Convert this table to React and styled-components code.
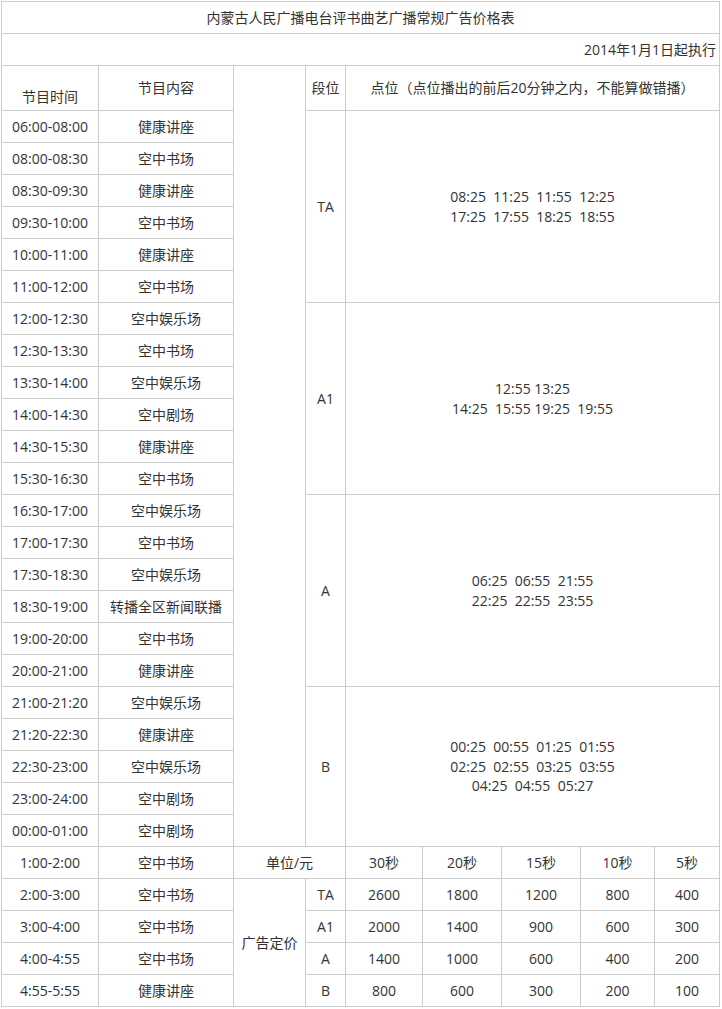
import React from 'react';
import styled, { createGlobalStyle } from 'styled-components';

const GlobalStyle = createGlobalStyle`
  html, body {
    margin: 0;
    padding: 0;
    background: #fff;
  }
  body {
    font-family: 'Open Sans', 'Noto Sans CJK SC', sans-serif;
    color: #333;
  }
`;

const Table = styled.table`
  margin: 1px 0 0 1px;
  width: 719px;
  border-collapse: collapse;
  table-layout: fixed;
  font-size: 14px;
  color: #333;
`;

const Cell = styled.td`
  border: 1px solid #ccc;
  padding: 0;
  height: ${props => props.h || 31}px;
  text-align: ${props => props.align || 'center'};
  vertical-align: ${props => props.valign || 'middle'};
  padding-right: ${props => (props.align === 'right' ? '3px' : '0')};
  padding-bottom: ${props => (props.valign === 'bottom' ? '3px' : '0')};
  line-height: 20px;
`;

const Points = styled(Cell)`
  white-space: pre;
  line-height: 19.5px;
`;

const widths = [97, 135, 72, 40, 77, 79, 79, 74, 65];

const schedule = [
  ['06:00-08:00', '健康讲座'],
  ['08:00-08:30', '空中书场'],
  ['08:30-09:30', '健康讲座'],
  ['09:30-10:00', '空中书场'],
  ['10:00-11:00', '健康讲座'],
  ['11:00-12:00', '空中书场'],
  ['12:00-12:30', '空中娱乐场'],
  ['12:30-13:30', '空中书场'],
  ['13:30-14:00', '空中娱乐场'],
  ['14:00-14:30', '空中剧场'],
  ['14:30-15:30', '健康讲座'],
  ['15:30-16:30', '空中书场'],
  ['16:30-17:00', '空中娱乐场'],
  ['17:00-17:30', '空中书场'],
  ['17:30-18:30', '空中娱乐场'],
  ['18:30-19:00', '转播全区新闻联播'],
  ['19:00-20:00', '空中书场'],
  ['20:00-21:00', '健康讲座'],
  ['21:00-21:20', '空中娱乐场'],
  ['21:20-22:30', '健康讲座'],
  ['22:30-23:00', '空中娱乐场'],
  ['23:00-24:00', '空中剧场'],
  ['00:00-01:00', '空中剧场'],
];

// segment starts: row index -> [label, span, points]
const segments = {
  0: ['TA', 6, '08:25  11:25  11:55  12:25\n17:25  17:55  18:25  18:55'],
  6: ['A1', 6, '12:55 13:25\n14:25  15:55 19:25  19:55'],
  12: ['A', 6, '06:25  06:55  21:55\n22:25  22:55  23:55'],
  18: ['B', 5, '00:25  00:55  01:25  01:55\n02:25  02:55  03:25  03:55\n04:25  04:55  05:27'],
};

const prices = [
  ['2:00-3:00', '空中书场', 'TA', [2600, 1800, 1200, 800, 400]],
  ['3:00-4:00', '空中书场', 'A1', [2000, 1400, 900, 600, 300]],
  ['4:00-4:55', '空中书场', 'A', [1400, 1000, 600, 400, 200]],
  ['4:55-5:55', '健康讲座', 'B', [800, 600, 300, 200, 100]],
];

const durations = ['30秒', '20秒', '15秒', '10秒', '5秒'];

const App = () => (
  <>
    <GlobalStyle />
    <Table>
      <colgroup>
        {widths.map((w, i) => <col key={i} style={{ width: w }} />)}
      </colgroup>
      <tbody>
        <tr>
          <Cell colSpan={9}>内蒙古人民广播电台评书曲艺广播常规广告价格表</Cell>
        </tr>
        <tr>
          <Cell colSpan={9} align="right">2014年1月1日起执行</Cell>
        </tr>
        <tr>
          <Cell h={41} valign="bottom">节目时间</Cell>
          <Cell h={44}>节目内容</Cell>
          <Cell rowSpan={24} />
          <Cell h={44}>段位</Cell>
          <Cell h={44} colSpan={5}>点位（点位播出的前后20分钟之内，不能算做错播）</Cell>
        </tr>
        {schedule.map(([time, show], i) => {
          const seg = segments[i];
          return (
            <tr key={time}>
              <Cell>{time}</Cell>
              <Cell>{show}</Cell>
              {seg && <Cell rowSpan={seg[1]}>{seg[0]}</Cell>}
              {seg && <Points rowSpan={seg[1]} colSpan={5}>{seg[2]}</Points>}
            </tr>
          );
        })}
        <tr>
          <Cell>1:00-2:00</Cell>
          <Cell>空中书场</Cell>
          <Cell colSpan={2}>单位/元</Cell>
          {durations.map(d => <Cell key={d}>{d}</Cell>)}
        </tr>
        {prices.map(([time, show, level, vals], i) => (
          <tr key={time}>
            <Cell>{time}</Cell>
            <Cell>{show}</Cell>
            {i === 0 && <Cell rowSpan={4}>广告定价</Cell>}
            <Cell>{level}</Cell>
            {vals.map((v, j) => <Cell key={j}>{v}</Cell>)}
          </tr>
        ))}
      </tbody>
    </Table>
  </>
);

export default App;
